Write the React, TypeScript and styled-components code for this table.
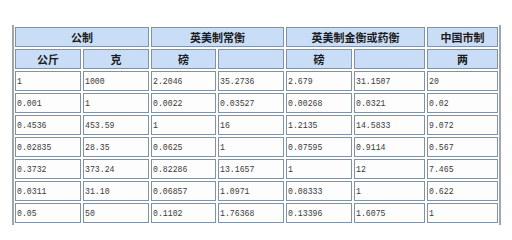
import React from 'react';
import styled, { createGlobalStyle } from 'styled-components';

const GlobalStyle = createGlobalStyle`
    html, body {
        margin: 0;
        padding: 0;
        background: #ffffff;
    }
`;

const Page = styled.div`
    width: 512px;
    height: 240px;
    padding: 25px 0 0 12px;
    box-sizing: border-box;
`;

const Table = styled.div`
    display: grid;
    grid-template-columns: 66px 66px 65px 66px 66px 71px 71px;
    grid-auto-rows: 20px;
    gap: 2px;
    width: fit-content;
    padding: 2px 1px;
    border-left: 2px solid #a2a6aa;
    border-right: 2px solid #a2a6aa;
`;

const Cell = styled.div<{ span?: number; head?: boolean }>`
    grid-column: span ${(props) => props.span || 1};
    box-sizing: border-box;
    border: 1px solid #7f92a6;
    display: flex;
    align-items: center;
    justify-content: ${(props) => props.head ? 'center' : 'flex-start'};
    padding: 0 1px;
    background-color: ${(props) => props.head ? '#c9def6' : '#fdfdfd'};
    color: ${(props) => props.head ? '#1c1c1c' : '#3a3a3a'};
    font-family: ${(props) => props.head
        ? '"Noto Sans CJK SC", "Noto Sans", sans-serif'
        : '"Liberation Mono", "DejaVu Sans Mono", monospace'};
    font-size: ${(props) => props.head ? '11px' : '8.2px'};
    font-weight: ${(props) => props.head ? 'bold' : 'normal'};
    white-space: nowrap;
    overflow: hidden;
`;

const groups = [
    { text: '公制', span: 2 },
    { text: '英美制常衡', span: 2 },
    { text: '英美制金衡或药衡', span: 2 },
    { text: '中国市制', span: 1 },
];

const units = ['公斤', '克', '磅', '', '磅', '', '两'];

const rows = [
    ['1', '1000', '2.2046', '35.2736', '2.679', '31.1507', '20'],
    ['0.001', '1', '0.0022', '0.03527', '0.00268', '0.0321', '0.02'],
    ['0.4536', '453.59', '1', '16', '1.2135', '14.5833', '9.072'],
    ['0.02835', '28.35', '0.0625', '1', '0.07595', '0.9114', '0.567'],
    ['0.3732', '373.24', '0.82286', '13.1657', '1', '12', '7.465'],
    ['0.0311', '31.10', '0.06857', '1.0971', '0.08333', '1', '0.622'],
    ['0.05', '50', '0.1102', '1.76368', '0.13396', '1.6075', '1'],
];

const App = () => {
    return (
        <Page>
            <GlobalStyle />
            <Table>
                { groups.map((g) => <Cell key={g.text} span={g.span} head>{ g.text }</Cell>) }
                { units.map((u, i) => <Cell key={'u' + i} head>{ u }</Cell>) }
                { rows.map((row, r) => row.map((v, c) => <Cell key={r + '-' + c}>{ v }</Cell>)) }
            </Table>
        </Page>
    );
}

export default App;
